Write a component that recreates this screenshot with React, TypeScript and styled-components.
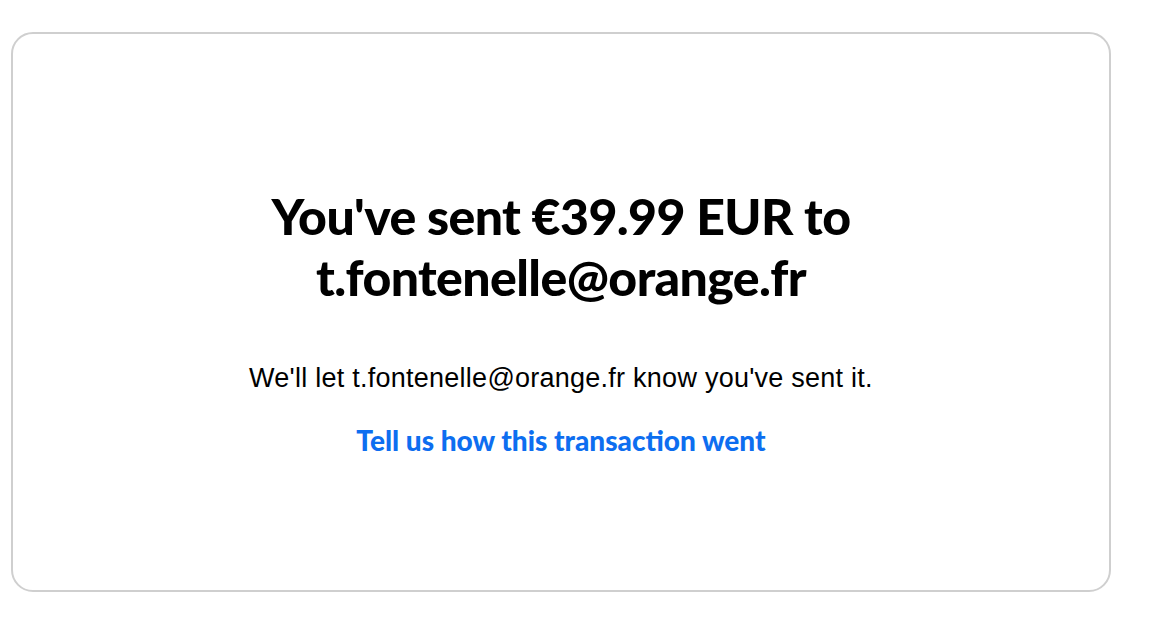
import styled, { createGlobalStyle } from 'styled-components'

const GlobalStyle = createGlobalStyle`
  html, body {
    margin: 0;
    padding: 0;
    background: #ffffff;
  }
  body {
    font-family: 'Lato', 'Liberation Sans', sans-serif;
    color: #000000;
  }
`

const Page = styled.div`
  padding: 32px 0 0 11px;
  width: 1100px;
`

// the rounded confirmation card
const Card = styled.section`
  box-sizing: border-box;
  height: 560px;
  border: 2px solid #cfcfcf;
  border-radius: 22px;
  display: flex;
  flex-direction: column;
  align-items: center;
  padding-top: 152px;
`

const Title = styled.h1`
  margin: 0;
  font-family: 'Lato', sans-serif;
  font-weight: 900;
  font-size: 50px;
  line-height: 61px;
  letter-spacing: -0.6px;
  text-align: center;
  color: #000000;
`

const Note = styled.p`
  margin: 54px 0 0;
  font-family: 'Liberation Sans', 'Open Sans', sans-serif;
  font-size: 27px;
  line-height: 32px;
  letter-spacing: 0.25px;
  color: #000000;
`

const Feedback = styled.a`
  margin-top: 28px;
  font-family: 'Lato', sans-serif;
  font-weight: 900;
  font-size: 28px;
  line-height: 36px;
  color: #0d6ef0;
  text-decoration: none;
  cursor: pointer;
`

const App = () => {
  return (
    <>
      <GlobalStyle />
      <Page>
        <Card>
          <Title>
            You've sent €39.99 EUR to
            <br />
            t.fontenelle@orange.fr
          </Title>
          <Note>We'll let t.fontenelle@orange.fr know you've sent it.</Note>
          <Feedback>Tell us how this transaction went</Feedback>
        </Card>
      </Page>
    </>
  )
}

export default App
